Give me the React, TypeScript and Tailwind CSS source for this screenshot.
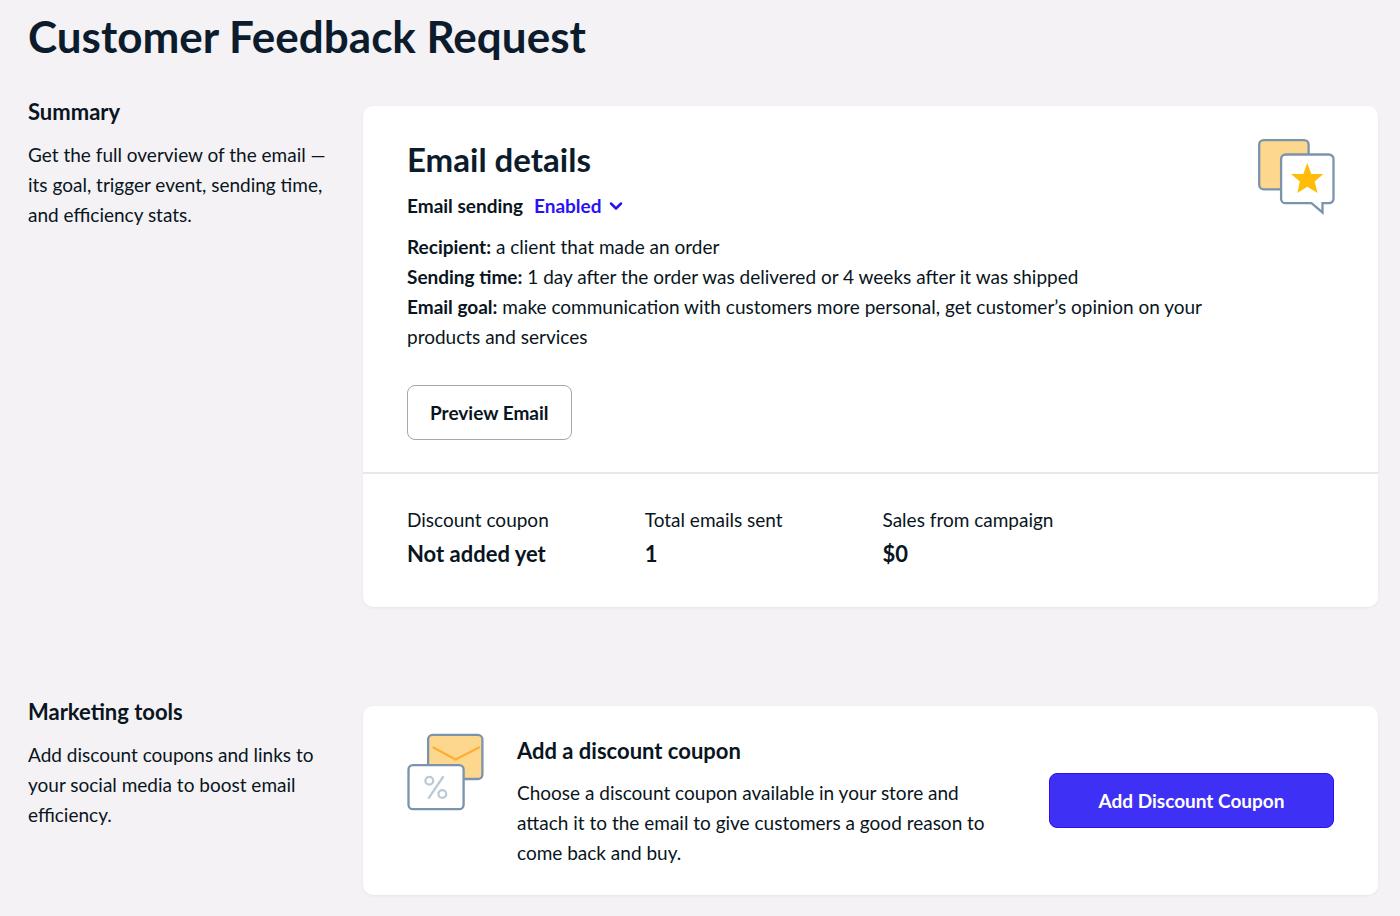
import React from "react";
import { ChevronDown } from "lucide-react";

const details = [
  { label: "Recipient", text: "a client that made an order" },
  { label: "Sending time", text: "1 day after the order was delivered or 4 weeks after it was shipped" },
  {
    label: "Email goal",
    text: "make communication with customers more personal, get customer’s opinion on your products and services",
  },
];

const stats = [
  { label: "Discount coupon", value: "Not added yet" },
  { label: "Total emails sent", value: "1" },
  { label: "Sales from campaign", value: "$0" },
];

// Speech bubble with a star, shown in the details card
function ReviewIcon() {
  return (
    <svg className="w-20 h-20 -mr-0.5 shrink-0" viewBox="0 0 80 80" fill="none" aria-hidden="true">
      <rect x="3.2" y="2.1" width="49.4" height="49.2" rx="4.5" fill="#fcd78d" stroke="#7b93ac" strokeWidth="2.3" />
      <path
        d="M29.600 16.500H73a4.500 4.500 0 0 1 4.500 4.500V60.700a4.500 4.500 0 0 1-4.500 4.500H66.500V74.500L55.500 65.200H29.600a4.500 4.500 0 0 1-4.500-4.500V21a4.500 4.500 0 0 1 4.500-4.500Z"
        fill="#fff"
        stroke="#7b93ac"
        strokeWidth="2.3"
      />
      <path
        d="M51.300 25L55.300 36H67.400L58.700 43.500L61.500 54.900L51.300 48.700L41.300 54.900L43.800 43.500L35 36H47.300Z"
        fill="#ffbd0a"
      />
    </svg>
  );
}

// Envelope with a percent card in front
function CouponIcon() {
  return (
    <svg className="w-[78px] h-[78px] shrink-0" viewBox="0 0 78 78" fill="none" aria-hidden="true">
      <rect x="21.1" y="1.9" width="54.3" height="44.1" rx="4.5" fill="#fcd78d" stroke="#7b93ac" strokeWidth="2.3" />
      <path d="M26.500 14.500L48.500 26.500L72 14.500" stroke="#ffad33" strokeWidth="2.3" strokeLinecap="round" />
      <rect x="1.5" y="32.1" width="55.1" height="44.1" rx="4.5" fill="#fff" stroke="#7b93ac" strokeWidth="2.3" />
      <circle cx="22.3" cy="47.800" r="3.9" stroke="#bdc9d5" strokeWidth="2.3" />
      <circle cx="35.3" cy="61" r="3.9" stroke="#bdc9d5" strokeWidth="2.3" />
      <path d="M36 44L21.800 64.800" stroke="#bdc9d5" strokeWidth="2.3" strokeLinecap="round" />
    </svg>
  );
}

function Section({ title, text, children }: { title: string; text: string; children: React.ReactNode }) {
  return (
    <section className="flex items-start">
      <div className="w-[335px] shrink-0 pr-6">
        <h2 className="text-[22px] leading-7 font-bold">{title}</h2>
        <p className="mt-[14px]">{text}</p>
      </div>
      <div className="mt-2 flex-1 min-w-0 bg-white rounded-[10px] shadow-[0_1px_3px_rgba(0,0,0,0.06)]">
        {children}
      </div>
    </section>
  );
}

export default function App() {
  const [status, setStatus] = React.useState("Enabled");

  return (
    <main className="min-h-screen bg-[#f4f2f5] pt-2 pb-5 pl-7 pr-[22px] font-['Lato',sans-serif] text-[19px] leading-[30px] text-[#091521]">
      <h1 className="text-[44px] leading-[56px] font-bold text-[#0c1c2c]">Customer Feedback Request</h1>

      <div className="mt-[34px] flex flex-col gap-[91px]">
        <Section
          title="Summary"
          text="Get the full overview of the email — its goal, trigger event, sending time, and efficiency stats."
        >
          <div className="flex justify-between gap-10 px-11 py-8">
            <div>
              <h3 className="pt-px text-[33px] leading-10 font-bold text-[#0c1c2c]">Email details</h3>
              <div className="mt-3 flex items-center gap-[11px] font-bold">
                <label htmlFor="status">Email sending</label>
                <div className="flex items-center gap-2 text-[#2a12f5]">
                  <select
                    id="status"
                    className="appearance-none field-sizing-content bg-transparent cursor-pointer"
                    value={status}
                    onChange={(e) => setStatus(e.target.value)}
                  >
                    <option>Enabled</option>
                    <option>Disabled</option>
                  </select>
                  <ChevronDown className="size-5 -ml-1 pointer-events-none" strokeWidth={3} />
                </div>
              </div>
              <div className="mt-[11px]">
                {details.map((d) => (
                  <p key={d.label}>
                    <b>{d.label}:</b> {d.text}
                  </p>
                ))}
              </div>
              <button
                type="button"
                className="mt-[33px] h-[55px] px-[22px] border border-[#a5a8ab] rounded-lg font-bold cursor-pointer"
              >
                Preview Email
              </button>
            </div>
            <ReviewIcon />
          </div>

          <dl className="grid grid-cols-4 gap-6 border-t-2 border-[#e6e7e8] px-11 pt-[31px] pb-[38px]">
            {stats.map((s) => (
              <div key={s.label}>
                <dt>{s.label}</dt>
                <dd className="mt-1 text-[22px] font-bold">{s.value}</dd>
              </div>
            ))}
          </dl>
        </Section>

        <Section
          title="Marketing tools"
          text="Add discount coupons and links to your social media to boost email efficiency."
        >
          <div className="flex items-center px-11 py-[27px]">
            <div className="self-start">
              <CouponIcon />
            </div>
            <div className="ml-8 flex-1 pt-[3px]">
              <h3 className="text-[22px] leading-[30px] font-bold">Add a discount coupon</h3>
              <p className="mt-3">
                Choose a discount coupon available in your store and attach it to the email to give customers a good
                reason to come back and buy.
              </p>
            </div>
            <button
              type="button"
              className="ml-11 w-[285px] h-[55px] shrink-0 rounded-lg border border-[#2a10f5] bg-[#3f30f5] text-white font-bold cursor-pointer"
            >
              Add Discount Coupon
            </button>
          </div>
        </Section>
      </div>
    </main>
  );
}
